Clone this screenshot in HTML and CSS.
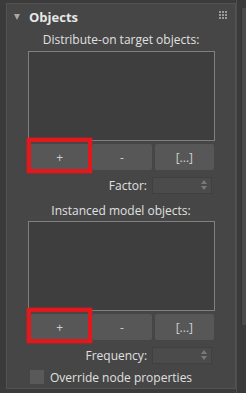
FILE: index.html
```html
<!DOCTYPE html>
<html lang="en">
<head>
    <meta charset="UTF-8">
    <meta name="viewport" content="width=device-width, initial-scale=1.0">
    <title>Objects</title>
    <link rel="stylesheet" href="styles.css">
</head>
<body>
    <div class="panel">
        <div class="rollout-head">
            <span class="arrow"></span>
            <span class="title">Objects</span>
            <svg class="grip" width="8" height="8" viewBox="0 0 8 8">
                <g fill="#9a9a9a">
                    <rect x="0" y="0" width="2" height="2"/><rect x="3" y="0" width="2" height="2"/><rect x="6" y="0" width="2" height="2"/>
                    <rect x="0" y="3" width="2" height="2"/><rect x="3" y="3" width="2" height="2"/><rect x="6" y="3" width="2" height="2"/>
                    <rect x="0" y="6" width="2" height="2"/><rect x="3" y="6" width="2" height="2"/><rect x="6" y="6" width="2" height="2"/>
                </g>
            </svg>
        </div>

        <div class="group-label first">Distribute-on target objects:</div>
        <div class="listbox"></div>
        <div class="btn-row">
            <button class="btn marked">+</button>
            <button class="btn">-</button>
            <button class="btn">[...]</button>
        </div>
        <div class="field-row">
            <label>Factor:</label>
            <div class="spinner"><span class="spin-arrows"></span></div>
        </div>

        <div class="group-label">Instanced model objects:</div>
        <div class="listbox"></div>
        <div class="btn-row">
            <button class="btn marked">+</button>
            <button class="btn">-</button>
            <button class="btn">[...]</button>
        </div>
        <div class="field-row">
            <label>Frequency:</label>
            <div class="spinner"><span class="spin-arrows"></span></div>
        </div>

        <div class="check-row">
            <span class="checkbox"></span>
            <span>Override node properties</span>
        </div>
    </div>
    <div class="scroll-strip">
        <div class="scroll-thumb"></div>
    </div>
</body>
</html>
```

FILE: styles.css
```css
body { margin: 0; background: #3b3b3b; display: flex; height: 393px; overflow: hidden; font-family: "Open Sans", "Noto Sans", sans-serif; font-size: 12px; color: #e0e0e0; }
.panel { margin: 3px 0 0 6px; width: 231px; height: 386px; box-sizing: border-box; background: #464646; border: 1px solid #525252; }
.rollout-head { height: 25px; display: flex; align-items: center; padding-left: 7px; }
.arrow { width: 0; height: 0; border-left: 3.5px solid transparent; border-right: 3.5px solid transparent; border-top: 6px solid #a8a8a8; margin-right: 9px; margin-top: 1px; }
.title { font-weight: bold; font-size: 13px; color: #e6e6e6; flex: 1; }
.grip { margin-right: 8px; margin-top: -4px; }
.group-label { height: 18px; line-height: 18px; text-align: center; margin-top: 8px; margin-bottom: 1px; }
.group-label.first { margin-top: 2px; margin-bottom: 2px; }
.listbox { margin-left: 21px; width: 187px; height: 90px; box-sizing: border-box; background: #3e3e3e; border: 1px solid #808080; }
.btn-row { display: grid; grid-template-columns: 1fr 1fr 1fr; gap: 3px; margin: 3px 0 0 23px; width: 184px; }
.btn { position: relative; height: 26px; background: #575757; border: none; border-radius: 2px; color: #cfcfcf; font-family: inherit; font-size: 12px; padding: 0; }
.btn.marked::after { content: ""; position: absolute; top: -6px; left: -3px; right: -3px; bottom: -3px; border: 4px solid #e3181d; box-shadow: 0 0 2px #e3181d; }
.field-row { display: flex; justify-content: flex-end; align-items: center; height: 17px; margin: 7px 23px 0 0; }
.field-row label { margin-right: 5px; }
.spinner { position: relative; width: 60px; height: 17px; box-sizing: border-box; background: #4b4b4b; border: 1px solid #404040; }
.spin-arrows { position: absolute; right: 4px; top: 2px; width: 0; height: 0; border-left: 3px solid transparent; border-right: 3px solid transparent; border-bottom: 4px solid #7a7a7a; }
.spin-arrows::after { content: ""; position: absolute; left: -3px; top: 6px; width: 0; height: 0; border-left: 3px solid transparent; border-right: 3px solid transparent; border-top: 4px solid #7a7a7a; }
.check-row { display: flex; align-items: center; margin: 6px 0 0 23px; height: 14px; }
.checkbox { width: 14px; height: 14px; background: #595959; margin-right: 6px; }
.scroll-strip { width: 9px; height: 393px; background: #3a3a3a; border-left: 1px solid #4e4e4e; display: flex; justify-content: flex-end; }
.scroll-thumb { width: 4px; height: 317px; margin-top: 8px; background: #4a4a4a; border-left: 1px solid #333; }
```
